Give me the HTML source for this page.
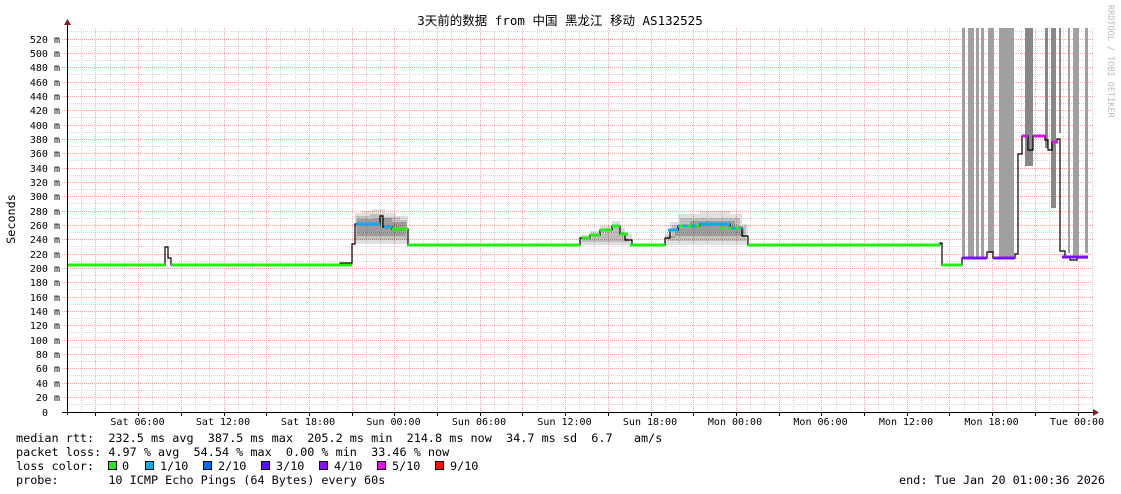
<!DOCTYPE html>
<html><head><meta charset="utf-8"><style>
html,body{margin:0;padding:0;background:#fff;width:1121px;height:494px;overflow:hidden}
svg{display:block}
text{font-family:"DejaVu Sans Mono","Liberation Mono","Noto Sans CJK SC",monospace;font-size:11.8px;fill:#000}
.ax{font-size:10px}
</style></head><body>
<svg width="1121" height="494" viewBox="0 0 1121 494" xmlns="http://www.w3.org/2000/svg">
<rect width="1121" height="494" fill="#fff"/>
<g stroke-width="1" stroke-dasharray="1,1">
<g stroke="#d6d6d6">
<line x1="67" x2="1093" y1="31.5" y2="31.5"/><line x1="67" x2="1093" y1="46.5" y2="46.5"/><line x1="67" x2="1093" y1="60.5" y2="60.5"/><line x1="67" x2="1093" y1="74.5" y2="74.5"/><line x1="67" x2="1093" y1="89.5" y2="89.5"/><line x1="67" x2="1093" y1="103.5" y2="103.5"/><line x1="67" x2="1093" y1="117.5" y2="117.5"/><line x1="67" x2="1093" y1="132.5" y2="132.5"/><line x1="67" x2="1093" y1="146.5" y2="146.5"/><line x1="67" x2="1093" y1="160.5" y2="160.5"/><line x1="67" x2="1093" y1="175.5" y2="175.5"/><line x1="67" x2="1093" y1="189.5" y2="189.5"/><line x1="67" x2="1093" y1="203.5" y2="203.5"/><line x1="67" x2="1093" y1="218.5" y2="218.5"/><line x1="67" x2="1093" y1="232.5" y2="232.5"/><line x1="67" x2="1093" y1="246.5" y2="246.5"/><line x1="67" x2="1093" y1="261.5" y2="261.5"/><line x1="67" x2="1093" y1="275.5" y2="275.5"/><line x1="67" x2="1093" y1="289.5" y2="289.5"/><line x1="67" x2="1093" y1="304.5" y2="304.5"/><line x1="67" x2="1093" y1="318.5" y2="318.5"/><line x1="67" x2="1093" y1="332.5" y2="332.5"/><line x1="67" x2="1093" y1="347.5" y2="347.5"/><line x1="67" x2="1093" y1="361.5" y2="361.5"/><line x1="67" x2="1093" y1="375.5" y2="375.5"/><line x1="67" x2="1093" y1="390.5" y2="390.5"/><line x1="67" x2="1093" y1="404.5" y2="404.5"/>
</g>
<g id="vg" stroke="#d6d6d6"></g>
<g id="vr" stroke="#f2a8a8"></g>
<g stroke="#f2a8a8">
<line x1="62" x2="1093" y1="39.5" y2="39.5"/><line x1="62" x2="1093" y1="53.5" y2="53.5"/><line x1="62" x2="1093" y1="67.5" y2="67.5"/><line x1="62" x2="1093" y1="82.5" y2="82.5"/><line x1="62" x2="1093" y1="96.5" y2="96.5"/><line x1="62" x2="1093" y1="110.5" y2="110.5"/><line x1="62" x2="1093" y1="125.5" y2="125.5"/><line x1="62" x2="1093" y1="139.5" y2="139.5"/><line x1="62" x2="1093" y1="153.5" y2="153.5"/><line x1="62" x2="1093" y1="168.5" y2="168.5"/><line x1="62" x2="1093" y1="182.5" y2="182.5"/><line x1="62" x2="1093" y1="196.5" y2="196.5"/><line x1="62" x2="1093" y1="211.5" y2="211.5"/><line x1="62" x2="1093" y1="225.5" y2="225.5"/><line x1="62" x2="1093" y1="239.5" y2="239.5"/><line x1="62" x2="1093" y1="254.5" y2="254.5"/><line x1="62" x2="1093" y1="268.5" y2="268.5"/><line x1="62" x2="1093" y1="282.5" y2="282.5"/><line x1="62" x2="1093" y1="297.5" y2="297.5"/><line x1="62" x2="1093" y1="311.5" y2="311.5"/><line x1="62" x2="1093" y1="325.5" y2="325.5"/><line x1="62" x2="1093" y1="340.5" y2="340.5"/><line x1="62" x2="1093" y1="354.5" y2="354.5"/><line x1="62" x2="1093" y1="368.5" y2="368.5"/><line x1="62" x2="1093" y1="383.5" y2="383.5"/><line x1="62" x2="1093" y1="397.5" y2="397.5"/>
</g>
</g>
<g fill="#a0a0a0">
<rect x="962" y="28" width="3" height="230"/><rect x="968" y="28" width="6" height="230"/><rect x="976" y="28" width="3" height="230"/><rect x="981" y="28" width="3" height="230"/><rect x="988" y="28" width="6" height="225"/><rect x="999" y="28" width="15" height="230"/><rect x="1068" y="28" width="2" height="225"/><rect x="1073" y="28" width="6" height="230"/><rect x="1085" y="28" width="3" height="225"/>
</g>
<g fill="#888">
<rect x="1025" y="28" width="8" height="138"/><rect x="1045" y="28" width="3" height="120"/><rect x="1051" y="28" width="5" height="180"/><rect x="1059" y="28" width="2" height="105"/>
</g>
<g fill="#000">
<path d="M355 213 H362 V211 H372 V209 H385 V213 H396 V216 H408 V244 H355 Z" opacity="0.12"/>
<path d="M356 216 H370 V214 H384 V217 H400 V220 H407 V240 H356 Z" opacity="0.14"/>
<path d="M357 219 H375 V218 H392 V222 H406 V236 H357 Z" opacity="0.18"/>
<path d="M580 235 H590 V231 H600 V226 H612 V221 H620 V228 H625 V234 H632 V245 H580 Z" opacity="0.13"/>
<path d="M582 238 H592 V234 H602 V230 H612 V226 H619 V232 H624 V238 H628 V242 H582 Z" opacity="0.15"/>
<path d="M665 232 H670 V222 H678 V214 H700 V211 H730 V214 H742 V224 H748 V245 H665 Z" opacity="0.12"/>
<path d="M667 235 H672 V225 H680 V218 H740 V226 H746 V241 H667 Z" opacity="0.14"/>
<path d="M669 238 H675 V228 H690 V221 H735 V229 H744 V236 H669 Z" opacity="0.18"/>
</g>
<path d="M67 265 H165 V247 H168 V258 H171 V265 H340 V263 H352 V244 H355 V224 H380 V216 H383 V227 H392 V229 H408 V245 H580 V238 H590 V235 H600 V230 H612 V226 H620 V234 H625 V240 H632 V245 H665 V238 H670 V230 H678 V226 H700 V224 H730 V228 H742 V236 H748 V245 H940 V243 H942 V265 H962 V258 H987 V252 H993 V258 H1015 V254 H1018 V154 H1022 V136 H1028 V150 H1033 V136 H1045 V140 H1048 V150 H1052 V142 H1057 V139 H1060 V251 H1065 V257 H1070 V260 H1077 V258 H1088" fill="none" stroke="#000" stroke-width="1.2"/>
<g stroke-width="3" fill="none">
<path d="M67 265 H165 M171 265 H352 M408 245 H580 M630 245 H665 M748 245 H940 M942 265 H962" stroke="#22ee11"/>
<path d="M356 224 H380 M384 227 H392" stroke="#11aaee"/>
<path d="M392 229 H408 M582 238 H590 M590 235 H600 M600 230 H612 M612 226 H620 M620 234 H628" stroke="#22ee11"/>
<path d="M668 230 H678 M678 226 H700 M700 224 H730 M730 228 H742" stroke="#11aaee"/>
<path d="M962 258 H987 M993 258 H1015 M1062 257 H1088" stroke="#7711ff"/>
<path d="M1022 136 H1028 M1033 136 H1045 M1052 142 H1058" stroke="#dd11ee"/>
</g>
<path d="M680 226 H700 M720 228 H740" stroke="#22ee11" stroke-width="3" stroke-dasharray="3,5"/>
<line x1="67.5" y1="22" x2="67.5" y2="415" stroke="#000"/>
<line x1="62" y1="412.5" x2="1095" y2="412.5" stroke="#000"/>
<path d="M64 25 L67.5 19 L71 25 Z" fill="#8b1a1a"/>
<path d="M1093 409 L1099 412.5 L1093 416 Z" fill="#8b1a1a"/>
<g id="ticks" stroke="#000"></g>
<g text-anchor="end" class="ax">
<text class="ax" x="60" y="43">520 m</text><text class="ax" x="60" y="57">500 m</text><text class="ax" x="60" y="71">480 m</text><text class="ax" x="60" y="86">460 m</text><text class="ax" x="60" y="100">440 m</text><text class="ax" x="60" y="114">420 m</text><text class="ax" x="60" y="129">400 m</text><text class="ax" x="60" y="143">380 m</text><text class="ax" x="60" y="157">360 m</text><text class="ax" x="60" y="172">340 m</text><text class="ax" x="60" y="186">320 m</text><text class="ax" x="60" y="200">300 m</text><text class="ax" x="60" y="215">280 m</text><text class="ax" x="60" y="229">260 m</text><text class="ax" x="60" y="243">240 m</text><text class="ax" x="60" y="258">220 m</text><text class="ax" x="60" y="272">200 m</text><text class="ax" x="60" y="286">180 m</text><text class="ax" x="60" y="301">160 m</text><text class="ax" x="60" y="315">140 m</text><text class="ax" x="60" y="329">120 m</text><text class="ax" x="60" y="344">100 m</text><text class="ax" x="60" y="358">80 m</text><text class="ax" x="60" y="372">60 m</text><text class="ax" x="60" y="387">40 m</text><text class="ax" x="60" y="401">20 m</text><text class="ax" x="48" y="416">0</text>
</g>
<g text-anchor="middle">
<text class="ax" x="137.5" y="425">Sat 06:00</text><text class="ax" x="223" y="425">Sat 12:00</text><text class="ax" x="308" y="425">Sat 18:00</text><text class="ax" x="393.5" y="425">Sun 00:00</text><text class="ax" x="479" y="425">Sun 06:00</text><text class="ax" x="564.5" y="425">Sun 12:00</text><text class="ax" x="650" y="425">Sun 18:00</text><text class="ax" x="735" y="425">Mon 00:00</text><text class="ax" x="820.5" y="425">Mon 06:00</text><text class="ax" x="906" y="425">Mon 12:00</text><text class="ax" x="991.5" y="425">Mon 18:00</text><text class="ax" x="1077" y="425">Tue 00:00</text>
</g>
<text x="560" y="25" text-anchor="middle" style="font-size:12.5px">3天前的数据 from 中国 黑龙江 移动 AS132525</text>
<text transform="translate(15,219) rotate(-90)" text-anchor="middle">Seconds</text>
<text transform="translate(1108,5) rotate(90)" style="font-size:8.5px;fill:#bbb">RRDTOOL / TOBI OETIKER</text>
<text x="16" y="442" xml:space="preserve">median rtt:  232.5 ms avg  387.5 ms max  205.2 ms min  214.8 ms now  34.7 ms sd  6.7   am/s</text>
<text x="16" y="456" xml:space="preserve">packet loss: 4.97 % avg  54.54 % max  0.00 % min  33.46 % now</text>
<text x="16" y="470">loss color:</text>
<text x="122" y="470">0</text>
<text x="160" y="470">1/10</text>
<text x="218" y="470">2/10</text>
<text x="276" y="470">3/10</text>
<text x="334" y="470">4/10</text>
<text x="392" y="470">5/10</text>
<text x="450" y="470">9/10</text>
<text x="16" y="484" xml:space="preserve">probe:       10 ICMP Echo Pings (64 Bytes) every 60s</text>
<text x="1105" y="484" text-anchor="end">end: Tue Jan 20 01:00:36 2026</text>
<g stroke="#000" stroke-width="1">
<rect x="108.5" y="461.5" width="8" height="8" fill="#22ee11"/>
<rect x="145.5" y="461.5" width="8" height="8" fill="#11aaee"/>
<rect x="203.5" y="461.5" width="8" height="8" fill="#1166ff"/>
<rect x="261.5" y="461.5" width="8" height="8" fill="#5511ff"/>
<rect x="319.5" y="461.5" width="8" height="8" fill="#8811ff"/>
<rect x="377.5" y="461.5" width="8" height="8" fill="#dd11ee"/>
<rect x="435.5" y="461.5" width="8" height="8" fill="#ff1111"/>
</g>
<script>
var ns="http://www.w3.org/2000/svg",vg=document.getElementById('vg'),vr=document.getElementById('vr'),tk=document.getElementById('ticks');
for(var k=0;k<=72;k++){var x=Math.round(67+k*14.233)+0.5;if(x>1093)break;
var l=document.createElementNS(ns,'line');l.setAttribute('x1',x);l.setAttribute('x2',x);l.setAttribute('y1',28);l.setAttribute('y2',412);
var h=k+1; if(h%3==0){vr.appendChild(l);var t=document.createElementNS(ns,'line');t.setAttribute('x1',x);t.setAttribute('x2',x);t.setAttribute('y1',412);t.setAttribute('y2',416);tk.appendChild(t);}else vg.appendChild(l);}
</script>
</svg>
</body></html>
